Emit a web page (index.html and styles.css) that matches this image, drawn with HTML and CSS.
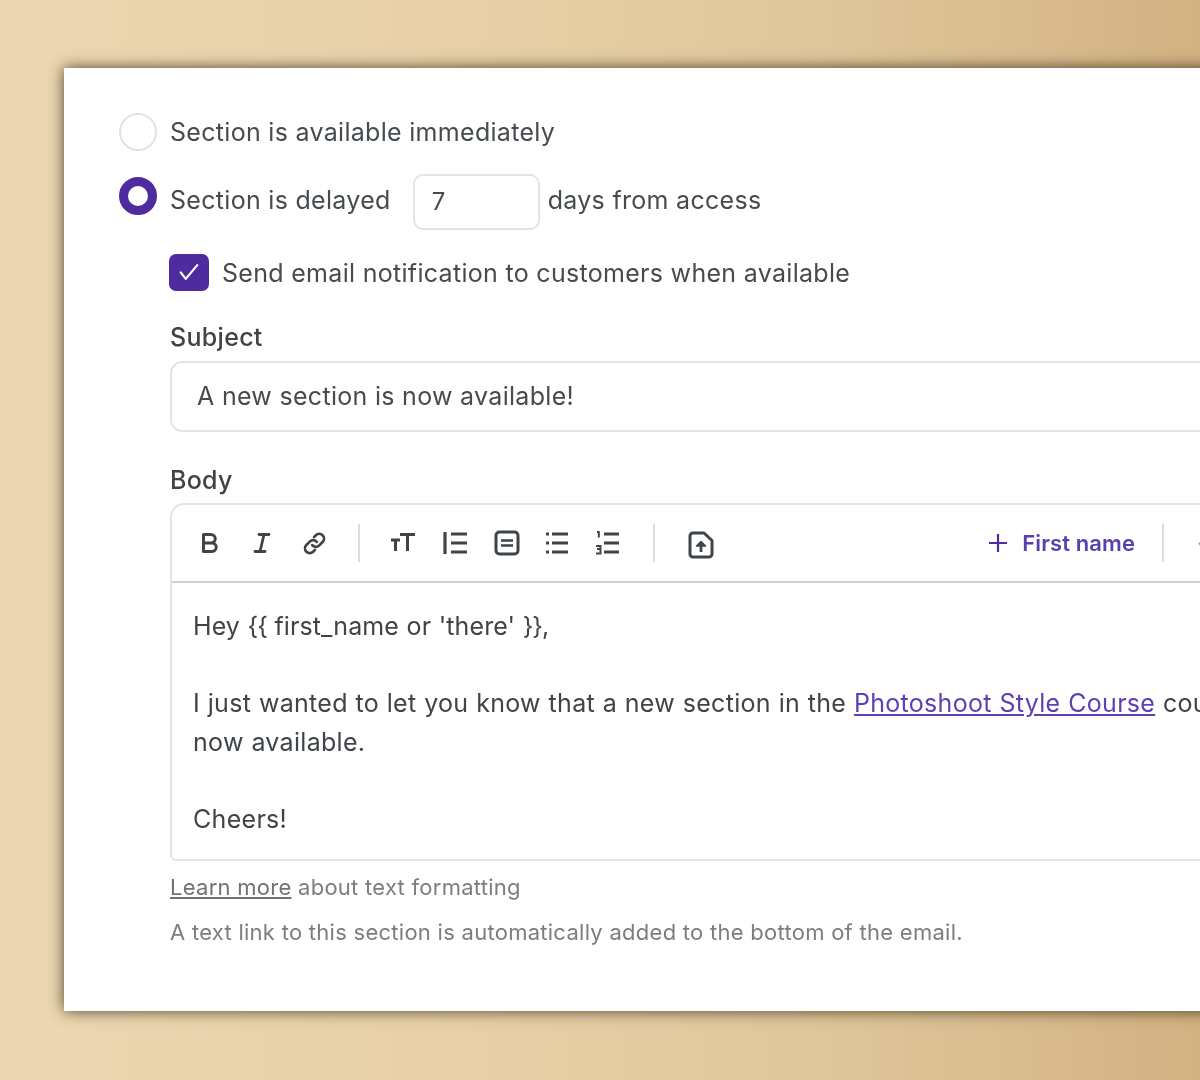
FILE: index.html
```html
<!DOCTYPE html>
<html lang="en">
<head>
    <title>Section availability</title>
    <meta charset="UTF-8">
    <link rel="stylesheet" href="styles.css">
</head>

<body>
    <main class="card">
        <div class="content">
            <div class="option option-first">
                <span class="radio"></span>
                <span>Section is available immediately</span>
            </div>

            <div class="option option-delayed">
                <span class="radio radio-on"></span>
                <span class="delayed-label">Section is delayed</span>
                <div class="days-input">7</div>
                <span class="days-label">days from access</span>
            </div>

            <div class="notify">
                <span class="checkbox">
                    <svg width="22" height="22" viewBox="0 0 24 24" fill="none" stroke="#fff" stroke-width="2.400" stroke-linecap="round" stroke-linejoin="round"><path d="M3 12.500l5.500 7L21 4.500"/></svg>
                </span>
                <span>Send email notification to customers when available</span>
            </div>

            <div class="fields">
                <div class="field-label">Subject</div>
                <div class="text-input">A new section is now available!</div>

                <div class="field-label field-label-body">Body</div>
                <div class="editor">
                    <div class="toolbar">
                        <div class="tool" title="Bold">
                            <svg width="24" height="24" viewBox="0 0 24 24" fill="none" stroke="#3f4448" stroke-width="3" stroke-linejoin="round"><path d="M5.500 3.500H13a4 4 0 0 1 0 8.500H5.500zM5.500 12H14a4.200 4.200 0 0 1 0 8.500H5.500z"/></svg>
                        </div>
                        <div class="tool" title="Italic">
                            <svg width="24" height="24" viewBox="0 0 24 24" fill="none" stroke="#3f4448" stroke-width="2.800" stroke-linecap="round"><path d="M9 3.500h10M5 20.500h10M14 3.500l-4 17"/></svg>
                        </div>
                        <div class="tool" title="Link">
                            <svg width="27" height="27" viewBox="0 0 24 24" fill="none" stroke="#3f4448" stroke-width="2.400" stroke-linecap="round"><path d="M10 13.500a4 4 0 0 0 6 .4l3.200-3.200a4.200 4.200 0 0 0-6-6L11.600 6.300"/><path d="M14 10.500a4 4 0 0 0-6-.4l-3.200 3.200a4.200 4.200 0 0 0 6 6l1.600-1.600"/></svg>
                        </div>
                        <span class="tool-sep"></span>
                        <div class="tool" title="Text size">
                            <svg width="28" height="24" viewBox="0 0 28 24" fill="none" stroke="#3f4448" stroke-width="3"><path d="M2 9h9M6.500 9v11M11 3.500h15M18.500 3.500V20"/></svg>
                        </div>
                        <div class="tool" title="Quote">
                            <svg width="26" height="24" viewBox="0 0 26 24" fill="none" stroke="#3f4448" stroke-width="2.800"><path d="M3 1v22" stroke-width="3.200"/><path d="M9 3h16M9 12h16M9 21h16"/></svg>
                        </div>
                        <div class="tool" title="Block">
                            <svg width="26" height="26" viewBox="0 0 26 26" fill="none" stroke="#3f4448" stroke-width="3"><rect x="2" y="2" width="22" height="22" rx="3.500"/><path d="M7 10.500h12M7 15.500h12" stroke-width="2.600"/></svg>
                        </div>
                        <div class="tool tool-list" title="Bulleted list">
                            <svg width="24" height="24" viewBox="0 0 24 24" fill="none" stroke="#3f4448" stroke-width="2.800"><path d="M7 3h16M7 12h16M7 21h16"/><path d="M1 3h3M1 12h3M1 21h3" stroke-width="3.200"/></svg>
                        </div>
                        <div class="tool tool-list" title="Numbered list">
                            <svg width="24" height="24" viewBox="0 0 24 24" fill="none" stroke="#3f4448" stroke-width="2.800"><path d="M9 3h15M9 12h15M9 21h15"/><path d="M2 1h1.800v5.500M1 15h4.500v3H2M5.500 18v4.500H1" stroke-width="2"/></svg>
                        </div>
                        <span class="tool-sep tool-sep-last"></span>
                        <div class="tool tool-upload" title="Upload file">
                            <svg width="26" height="28" viewBox="0 0 26 28" fill="none" stroke="#3f4448" stroke-width="3" stroke-linejoin="round"><path d="M5 2h11l8 7.500V23a3 3 0 0 1-3 3H5a3 3 0 0 1-3-3V5a3 3 0 0 1 3-3z"/><path d="M13 21v-8" stroke-width="2.800"/><path d="M8.500 15L13 10.500l4.500 4.500z" fill="#3f4448" stroke-width="1.600"/></svg>
                        </div>

                        <div class="tool-right">
                            <div class="insert-name">
                                <svg width="20" height="20" viewBox="0 0 20 20" fill="none" stroke="#4f2ba0" stroke-width="2.200"><path d="M10 1v18M1 10h18"/></svg>
                                <span>First name</span>
                            </div>
                            <span class="tool-sep"></span>
                            <div class="tool tool-muted">
                                <svg width="24" height="24" viewBox="0 0 24 24" fill="none" stroke="#9a9ea1" stroke-width="2.200"><path d="M4 12l6 6 10-12"/></svg>
                            </div>
                        </div>
                    </div>

                    <div class="editor-body">
                        <p class="greeting">Hey <span class="brace">{{</span> first_name or 'there' <span class="brace">}}</span>,</p>
                        <p>I just wanted to let you know that a new section in the <a href="#">Photoshoot Style Course</a> course is<br>now available.</p>
                        <p>Cheers!</p>
                    </div>
                </div>

                <p class="help help-first"><a href="#">Learn more</a> about text formatting</p>
                <p class="help help-second">A text link to this section is automatically added to the bottom of the email.</p>
            </div>
        </div>
    </main>
</body>
</html>
```

FILE: styles.css
```css
html {
    height: 100%;
}

body {
    margin: 0;
    height: 1080px;
    overflow: hidden;
    box-sizing: border-box;
    padding: 68px 0 0 64px;
    font-family: Inter, "Liberation Sans", sans-serif;
    font-size: 25px;
    letter-spacing: .3px;
    color: #464b4f;
    background: linear-gradient(90deg, #ecd7b2 0%, #e8d1a9 35%, #dfc59a 70%, #d3b283 100%);
}

.card {
    width: 1400px;
    height: 943px;
    background-color: #fff;
    box-shadow: 0 0 14px rgba(40, 30, 10, .8);
}

.content {
    padding: 44px 0 0 55px;
    filter: blur(.7px);
}

/* radio rows */
.option {
    display: flex;
    align-items: center;
    gap: 13px;
}

.option-first {
    height: 40px;
}

.option-delayed {
    height: 56px;
    margin-top: 22px;
}

.radio {
    width: 38px;
    height: 38px;
    box-sizing: border-box;
    border: 2px solid #e2e2e2;
    border-radius: 50%;
    flex: none;
}

.radio-on {
    border: 9px solid #4f2ba0;
    align-self: flex-start;
    margin-top: 3px;
}

.delayed-label,
.days-label {
    padding-bottom: 4px;
}

.days-input {
    width: 127px;
    height: 56px;
    box-sizing: border-box;
    margin: 0 -5px 0 9px;
    padding: 11px 0 0 17px;
    border: 2px solid #e4e4e4;
    border-radius: 10px;
    line-height: 30px;
    font-size: 24px;
}

/* checkbox row */
.notify {
    display: flex;
    align-items: center;
    gap: 13px;
    height: 38px;
    margin: 24px 0 0 50px;
}

.checkbox {
    display: flex;
    align-items: center;
    justify-content: center;
    width: 40px;
    height: 37px;
    margin-top: -2px;
    border-radius: 7px;
    background-color: #4f2ba0;
}

.fields {
    margin-left: 51px;
    width: 1200px;
}

.field-label {
    height: 30px;
    margin-top: 30px;
    line-height: 30px;
    font-weight: 500;
    color: #3f4448;
}

.field-label-body {
    margin-top: 33px;
}

.text-input {
    height: 71px;
    box-sizing: border-box;
    margin-top: 9px;
    padding-left: 25px;
    border: 2px solid #e4e4e4;
    border-radius: 12px;
    line-height: 67px;
}

/* rich text editor */
.editor {
    height: 358px;
    box-sizing: border-box;
    margin-top: 8px;
    border: 2px solid #e4e4e4;
    border-radius: 14px 14px 0 6px;
}

.toolbar {
    display: flex;
    align-items: center;
    height: 76px;
    padding-left: 12px;
    border-bottom: 2px solid #cfd0d0;
}

.tool {
    display: flex;
    align-items: center;
    justify-content: center;
    width: 52px;
    height: 40px;
    flex: none;
}

.tool-list {
    margin-left: -2px;
}

.tool-upload {
    margin: 4px 0 0 3px;
}

.tool-sep {
    width: 2px;
    height: 38px;
    margin: 0 17px 0 18px;
    background-color: #dcdcdc;
    flex: none;
}

.tool-sep-last {
    margin-left: 20px;
}

.tool-right {
    display: flex;
    align-items: center;
    margin-left: auto;
    padding-right: 135px;
}

.insert-name {
    display: flex;
    align-items: center;
    gap: 14px;
    margin-right: 9px;
    font-size: 22px;
    letter-spacing: .1px;
    font-weight: 600;
    color: #5a3fae;
}

.editor-body {
    padding: 24px 0 0 21px;
    line-height: 38.5px;
    word-spacing: .4px;
    color: #3f4448;
}

.editor-body p {
    margin: 0 0 38.5px;
}

.editor-body a {
    color: #5f3fb5;
}

.greeting {
    letter-spacing: .1px;
}

.brace {
    letter-spacing: -1px;
}

.help {
    margin: 0;
    font-size: 22px;
    letter-spacing: .27px;
    color: #7a7e81;
}

.help a {
    color: #6f7376;
}

.help-first {
    margin-top: 13px;
}

.help-second {
    margin-top: 19px;
}
```
